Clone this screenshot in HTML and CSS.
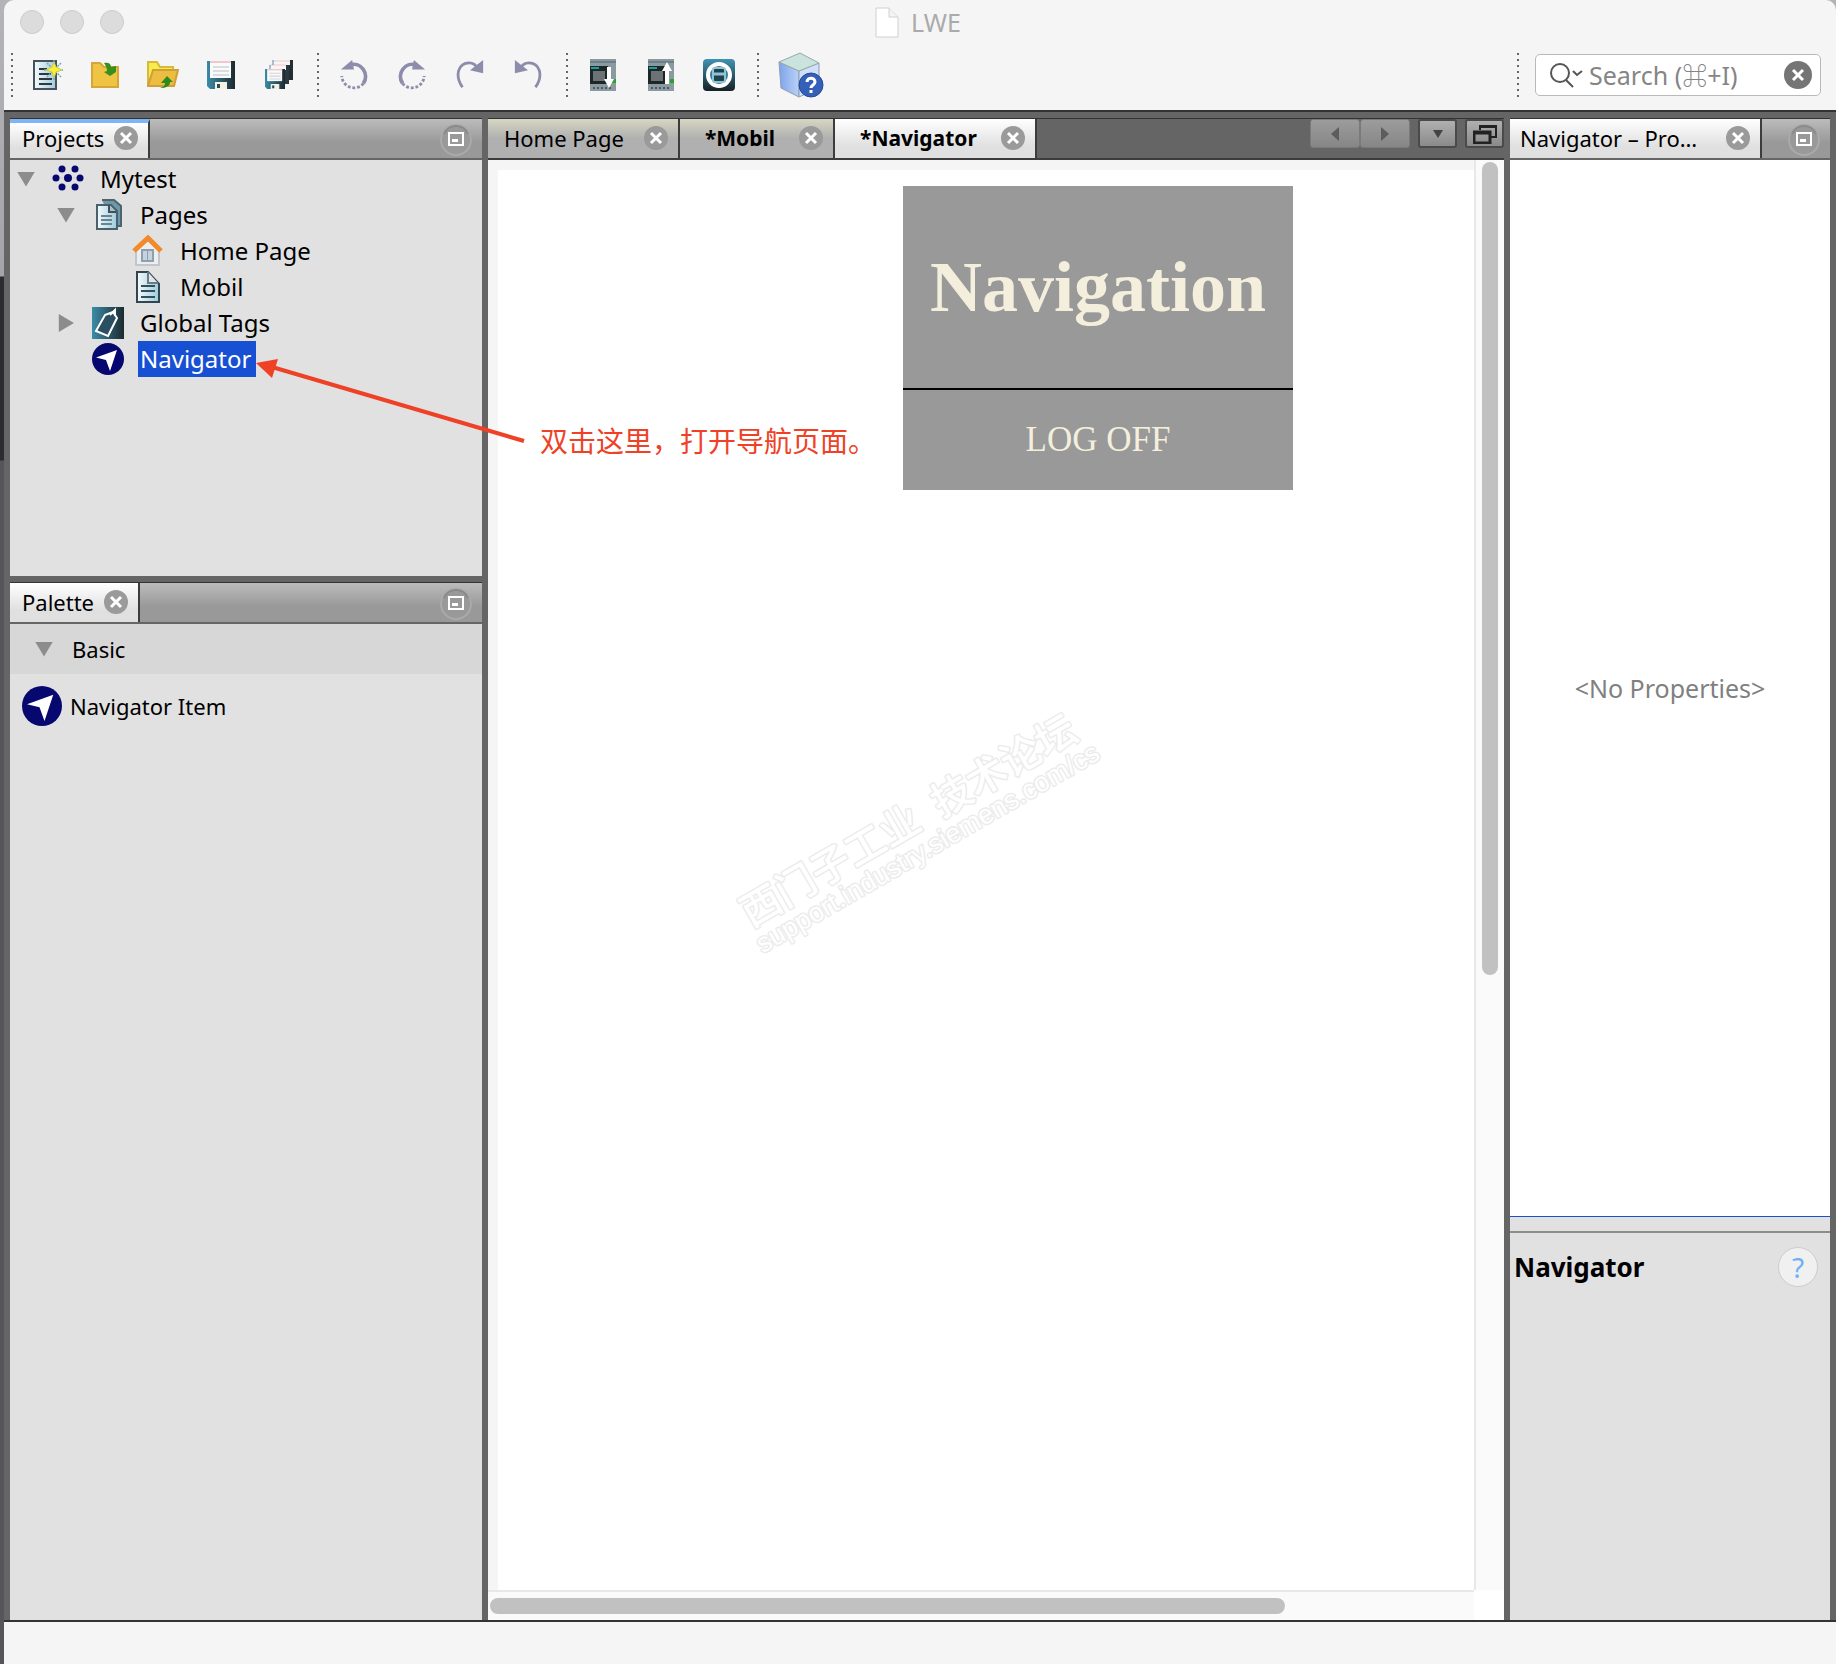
FILE: index.html
```html
<!DOCTYPE html>
<html lang="en">
<head>
<meta charset="utf-8">
<title>LWE</title>
<link rel="stylesheet" href="styles.css">
</head>
<body>
<svg class="defs" width="0" height="0" aria-hidden="true">
  <defs>
    <linearGradient id="page-fill" x1="0" y1="0" x2="1" y2="0"><stop offset="0" stop-color="#f4fafc"/><stop offset="1" stop-color="#9dcbdc"/></linearGradient>
    <linearGradient id="disk-fill" x1="0" y1="0" x2="1" y2="0"><stop offset="0" stop-color="#3b8ba8"/><stop offset="1" stop-color="#1c2a30"/></linearGradient>
    <linearGradient id="web-fill" x1="0" y1="0" x2="0" y2="1"><stop offset="0" stop-color="#3f93b3"/><stop offset="1" stop-color="#172125"/></linearGradient>
    <linearGradient id="cube-fill" x1="0" y1="0" x2="1" y2="0"><stop offset="0" stop-color="#7ea3ea"/><stop offset="1" stop-color="#b9d2f6"/></linearGradient>
    <symbol id="close" viewBox="0 0 24 24"><circle cx="12" cy="12" r="12" fill="#9a9a9a"/><path d="M7 7l10 10M17 7L7 17" stroke="#fff" stroke-width="3"/></symbol>
    <symbol id="minimize" viewBox="0 0 32 32"><circle cx="16" cy="16" r="15" fill="#999" stroke="#aaa" stroke-width="2"/><path d="M4 10A13 13 0 0 1 28 10" fill="none" stroke="#8b8b8b" stroke-width="2"/><rect x="9" y="9" width="14" height="12" fill="none" stroke="#fff" stroke-width="2"/><path d="M12 16.500h6" stroke="#fff" stroke-width="3"/></symbol>
    <symbol id="compass" viewBox="0 0 32 32"><circle cx="16" cy="16" r="16" fill="#07086f"/><path d="M25 7L4 14.500l10 2.500 4 11z" fill="#fff"/></symbol>
    <symbol id="floppy" viewBox="0 0 28 28"><path d="M0 0h28v28H3l-3-3z" fill="url(#disk-fill)"/><path d="M3 0h21v17H3z" fill="#fafafa"/><path d="M3 1h21" stroke="#f3c6ce" stroke-width="2"/><path d="M6 6h16M6 10h16M6 14h16" stroke="#cfd3d8" stroke-width="1.500"/><path d="M8 21h12v7H8z" fill="#f3f2df"/><path d="M10 23h3v4h-3z" fill="#244c5b"/></symbol>
    <symbol id="plc" viewBox="0 0 26 32"><path d="M0 0h26v32H0z" fill="#8a9aa0"/><path d="M0 3h26" stroke="#6c7e86" stroke-width="2"/><path d="M0 7h18v18H0z" fill="#1c2828"/><path d="M1 9h8" stroke="#18a0a0" stroke-width="2"/><path d="M3 12h12v10H3z" fill="#6c7276"/><path d="M3 29h20" stroke="#4c5a60" stroke-width="2" stroke-dasharray="2 2"/><path d="M22 20h4v4h-4z" fill="#2aa32a"/></symbol>
    <symbol id="arc" viewBox="0 0 32 32"><path d="M8 29C-1 16 4 3 15 3c5 0 8 3 10 7" fill="none" stroke="#8d8cab" stroke-width="3"/><path d="M30 0v14l-14-3z" fill="#8d8cab"/></symbol>
    <symbol id="spin" viewBox="0 0 32 32"><path d="M6 25A13 13 0 0 1 20 5" fill="none" stroke="#8d8cab" stroke-width="4"/><path d="M6 25A13 13 0 0 0 29 17" fill="none" stroke="#8d8cab" stroke-width="3" stroke-dasharray="3 2"/><path d="M18 0l12 10-14 0z" fill="#8d8cab"/></symbol>
  </defs>
</svg>
<div class="window">
  <header class="titlebar">
    <div class="lights"><span></span><span></span><span></span></div>
    <h1 class="title"><svg width="24" height="31" viewBox="0 0 24 31"><path d="M1 1h13l9 9v20H1z" fill="#fff" stroke="#d0d0d0"/><path d="M14 1v9h9" fill="#f4f4f4" stroke="#d0d0d0"/></svg>LWE</h1>
  </header>

  <div class="toolbar" role="toolbar">
    <span class="sep"></span>
    <button class="tool" aria-label="New"><svg width="32" height="32" viewBox="0 0 32 32"><path d="M3 2h22v28H3z" fill="url(#page-fill)" stroke="#47525c" stroke-width="2"/><path d="M8 10h8M8 15h12M8 20h13M8 25h13" stroke="#30383e" stroke-width="2"/><path d="M23 1v20M13 11h20M16 4l14 14M30 4L16 18" stroke="#6fa6cc" stroke-width="1.500" stroke-dasharray="2 1"/><path d="M23 3l2 5 6 3-6 2-2 6-2-6-6-2 6-3z" fill="#f4f03c" stroke="#d9c93a"/></svg></button>
    <button class="tool" aria-label="New project"><svg width="30" height="30" viewBox="0 0 30 30"><path d="M2 3h8l4 4h14v20H2z" fill="#f0c443" stroke="#d6a63a" stroke-width="2"/><path d="M14 3c5-1 7 1 7 4l5-1v6l-6 4-6-4 3-1c0-3-1-5-3-8z" fill="#36901f"/></svg></button>
    <button class="tool" aria-label="Open project"><svg width="32" height="30" viewBox="0 0 32 30"><path d="M1 27V2h9l3 5h13v5" fill="#f3ee4c" stroke="#d9b93a" stroke-width="2"/><path d="M6 10h25l-4 16H1z" fill="#edbd41" stroke="#d0a038" stroke-width="2"/><path d="M13 28c4-1 5-3 5-5h-4l6-7 6 6h-3c0 4-4 6-10 6z" fill="#2f8a1c"/></svg></button>
    <button class="tool" aria-label="Save"><svg width="28" height="28"><use href="#floppy"/></svg></button>
    <button class="tool" aria-label="Save all"><svg width="28" height="30" viewBox="0 0 28 30"><path d="M8 0h20v20h-4V3H8z" fill="#222e33"/><path d="M8 0h17v5H8z" fill="#f6f6f6"/><path d="M8 1h17" stroke="#f3c6ce"/><path d="M5 5h19v19h-4V8H5z" fill="#2b383e"/><path d="M5 5h16v5H5z" fill="#f6f6f6"/><path d="M5 5h16" stroke="#f3c6ce"/><path d="M8 0v5M5 5v5" stroke="#4592ad"/><use href="#floppy" x="0" y="9" width="20" height="20"/></svg></button>
    <span class="sep"></span>
    <button class="tool" aria-label="Rotate back"><svg class="flip" width="30" height="32"><use href="#spin"/></svg></button>
    <button class="tool" aria-label="Rotate forward"><svg width="30" height="32"><use href="#spin"/></svg></button>
    <button class="tool" aria-label="Redo"><svg width="30" height="32"><use href="#arc"/></svg></button>
    <button class="tool" aria-label="Undo"><svg class="flip" width="30" height="32"><use href="#arc"/></svg></button>
    <span class="sep"></span>
    <button class="tool" aria-label="Download"><svg width="26" height="32" viewBox="0 0 26 32"><use href="#plc"/><path d="M17 8h4v12h3l-5 9-5-9h3z" fill="#fff"/></svg></button>
    <button class="tool" aria-label="Upload"><svg width="26" height="32" viewBox="0 0 26 32"><use href="#plc"/><path d="M17 25h4V12h3l-5-9-5 9h3z" fill="#fff"/></svg></button>
    <button class="tool" aria-label="Web view"><svg width="32" height="32" viewBox="0 0 32 32"><rect width="32" height="32" rx="4" fill="url(#web-fill)"/><circle cx="16" cy="16" r="11" fill="#387f99" stroke="#fff" stroke-width="4"/><rect x="10" y="9" width="12" height="14" rx="2" fill="#22414e" stroke="#8fc3d6" stroke-width="2"/><path d="M11 15h10" stroke="#8fc3d6" stroke-width="3"/></svg></button>
    <span class="sep"></span>
    <button class="tool tool-wide" aria-label="Help"><svg width="46" height="46" viewBox="0 0 46 46"><path d="M1 10l20 9v26L3 36z" fill="url(#cube-fill)" stroke="#8e9cb8"/><path d="M21 19l20-8v25l-20 9z" fill="#cfe0f8" stroke="#8e9cb8"/><path d="M1 10L22 1l19 10-20 8z" fill="#cae3dc" stroke="#98aaa8"/><circle cx="33" cy="33" r="12" fill="#3560ba" stroke="#27489a"/><path d="M29 30c0-5 8-5 8 0 0 3-4 3-4 6" fill="none" stroke="#fff" stroke-width="3"/><path d="M31.500 38h3v3h-3z" fill="#fff"/></svg></button>
    <span class="sep sep-end"></span>
    <label class="search">
      <svg width="34" height="26" viewBox="0 0 34 26"><circle cx="11" cy="11" r="9" fill="none" stroke="#555" stroke-width="2"/><path d="M17 18l7 7M24 9l4 4 5-4" fill="none" stroke="#555" stroke-width="2"/></svg>
      <input type="text" aria-label="Search" placeholder="Search (⌘+I)">
      <button class="plain" aria-label="Clear"><svg width="28" height="28" viewBox="0 0 28 28"><circle cx="14" cy="14" r="14" fill="#757575"/><path d="M9 9l10 10M19 9L9 19" stroke="#fff" stroke-width="3"/></svg></button>
    </label>
  </div>

  <main class="workspace">
    <div class="side">
      <section class="panel projects">
        <div class="tabbar">
          <div class="tab tab-active tab-focus"><span>Projects</span><button class="plain" aria-label="Close Projects"><svg width="24" height="24"><use href="#close"/></svg></button></div>
          <button class="plain min" aria-label="Minimize Projects"><svg width="32" height="32"><use href="#minimize"/></svg></button>
        </div>
        <ul class="tree">
          <li class="row"><span class="twist open"></span><svg class="ico" viewBox="0 0 32 32"><path d="M0 15h32" stroke="#c9cbe0"/><g fill="#07086f"><circle cx="10" cy="6" r="3.500"/><circle cx="23" cy="6" r="3.500"/><circle cx="4" cy="15" r="3.500"/><circle cx="16" cy="15" r="4"/><circle cx="28" cy="15" r="3.500"/><circle cx="10" cy="24" r="3.500"/><circle cx="23" cy="24" r="3.500"/></g></svg><span class="name">Mytest</span></li>
          <li class="row level-1"><span class="twist open"></span><svg class="ico" viewBox="0 0 32 32"><path d="M10 1h12l7 6v20h-7" fill="#6f97a8" stroke="#4b6470" stroke-width="2"/><path d="M5 6h14l6 6v18H5z" fill="url(#page-fill)" stroke="#47616d" stroke-width="2"/><path d="M17 6v7h7" fill="#aebfc6" stroke="#3c5058" stroke-width="2"/><path d="M9 17h11M9 21h11M9 25h11" stroke="#6a8490" stroke-width="2"/></svg><span class="name">Pages</span></li>
          <li class="row level-2"><svg class="ico" viewBox="0 0 32 32"><path d="M4 15L16 5l11 10v15H4z" fill="#eceef0" stroke="#c2c6ca" stroke-width="2"/><path d="M10 15h11v11H10z" fill="#c5d3de" stroke="#8f9fac" stroke-width="2"/><path d="M15.500 15v11" stroke="#8f9fac"/><path d="M2 16L16 3l13 13" fill="none" stroke="#f28a2c" stroke-width="5"/></svg><span class="name">Home Page</span></li>
          <li class="row level-2"><svg class="ico" viewBox="0 0 32 32"><path d="M5 1h11l11 12v18H5z" fill="url(#page-fill)" stroke="#33454f" stroke-width="2"/><path d="M16 1v11h10" fill="#dfe7ea" stroke="#6b7c84" stroke-width="2"/><path d="M9 15h14M9 20h14M9 26h14" stroke="#31505c" stroke-width="2"/></svg><span class="name">Mobil</span></li>
          <li class="row level-1"><span class="twist shut"></span><svg class="ico" viewBox="0 0 32 32"><rect width="32" height="32" fill="url(#disk-fill)"/><path d="M13 8l8-3 4 6-9 18-12-5z" fill="#2a4f60" stroke="#fff" stroke-width="2"/><path d="M18 8l5-5v6" fill="none" stroke="#fff" stroke-width="2"/></svg><span class="name">Global Tags</span></li>
          <li class="row level-1"><span class="twist"></span><svg class="ico"><use href="#compass"/></svg><span class="name selected">Navigator</span></li>
        </ul>
      </section>
      <section class="panel palette">
        <div class="tabbar">
          <div class="tab tab-active"><span>Palette</span><button class="plain" aria-label="Close Palette"><svg width="24" height="24"><use href="#close"/></svg></button></div>
          <button class="plain min" aria-label="Minimize Palette"><svg width="32" height="32"><use href="#minimize"/></svg></button>
        </div>
        <h2 class="category"><span class="twist open"></span>Basic</h2>
        <div class="item"><svg width="40" height="40"><use href="#compass"/></svg><span>Navigator Item</span></div>
      </section>
    </div>

    <section class="editor">
      <div class="tabbar tabbar-dark">
        <div class="tab"><span>Home Page</span><button class="plain" aria-label="Close Home Page"><svg width="24" height="24"><use href="#close"/></svg></button></div>
        <div class="tab tab-changed"><span>*Mobil</span><button class="plain" aria-label="Close Mobil"><svg width="24" height="24"><use href="#close"/></svg></button></div>
        <div class="tab tab-active tab-changed"><span>*Navigator</span><button class="plain" aria-label="Close Navigator"><svg width="24" height="24"><use href="#close"/></svg></button></div>
        <div class="tabtools">
          <div class="pair">
            <button class="small" aria-label="Previous tab"><svg width="8" height="14" viewBox="0 0 8 14"><path d="M8 0v14L0 7z" fill="#5c5c5c"/></svg></button>
            <button class="small" aria-label="Next tab"><svg width="8" height="14" viewBox="0 0 8 14"><path d="M0 0v14l8-7z" fill="#5c5c5c"/></svg></button>
          </div>
          <button class="small strong" aria-label="Tab list"><svg width="10" height="8" viewBox="0 0 10 8"><path d="M0 0h10L5 8z" fill="#444"/></svg></button>
          <button class="small strong" aria-label="Restore"><svg width="24" height="20" viewBox="0 0 24 20"><path d="M7 6V2h16v11h-5M7 3h16" fill="none" stroke="#222" stroke-width="2"/><path d="M1 8h16v11H1zM1 9h16" fill="none" stroke="#222" stroke-width="3"/></svg></button>
        </div>
      </div>
      <div class="view">
        <div class="canvas">
          <div class="sheet">
            <nav class="nav">
              <h2>Navigation</h2>
              <a href="#logoff">LOG OFF</a>
            </nav>
          </div>
          <svg class="watermark" width="400" height="300" viewBox="-200 -150 400 300"><g transform="rotate(-30)" text-anchor="middle"><text class="mark-big" y="15">西门子工业&#8194;技术论坛</text><text class="mark-small" x="3" y="43">support.industry.siemens.com/cs</text></g></svg>
        </div>
        <div class="vscroll"><span></span></div>
        <div class="hscroll"><span></span></div>
        <div class="corner"></div>
      </div>
    </section>

    <section class="panel properties">
      <div class="tabbar">
        <div class="tab tab-active tab-props"><span>Navigator – Pro…</span><button class="plain" aria-label="Close Properties"><svg width="24" height="24"><use href="#close"/></svg></button></div>
        <button class="plain min" aria-label="Minimize Properties"><svg width="32" height="32"><use href="#minimize"/></svg></button>
      </div>
      <div class="empty">&lt;No Properties&gt;</div>
      <div class="about">
        <div class="about-head"><h2>Navigator</h2><button class="help" aria-label="Help">?</button></div>
      </div>
    </section>

    <div class="note" lang="zh">
      <svg width="270" height="88" viewBox="0 0 270 88"><path d="M268 82L16 8" stroke="#ee4125" stroke-width="4"/><path d="M0 4l22-4-6 19z" fill="#ee4125"/></svg>
      <p>双击这里，打开导航页面。</p>
    </div>
  </main>
  <footer class="status"></footer>
</div>
</body>
</html>
```
FILE: styles.css
```css
* { box-sizing: border-box; }

body {
  margin: 0;
  padding-left: 4px;
  background: linear-gradient(#b4b3b8 0, #a5a4aa 276px, #2b2c2f 277px, #2b2c2f 460px, #555659 461px);
  color: #000;
  font: 22px/30px "Noto Sans", "Noto Sans CJK SC", sans-serif;
}

h1, h2, p, ul { margin: 0; padding: 0; font-weight: 400; }
button, input { font: inherit; color: inherit; }
svg { display: block; flex: none; }
.defs { position: absolute; }
.plain { display: block; padding: 0; border: 0; background: none; flex: none; }

.window {
  display: flex;
  flex-direction: column;
  min-height: 100vh;
  border-radius: 10px 10px 0 0;
  overflow: hidden;
  background: #f5f5f5;
}

.titlebar {
  display: grid;
  grid-template-columns: 1fr auto 1fr;
  align-items: center;
  height: 44px;
  padding: 0 20px 0 16px;
}
.lights { display: flex; gap: 16px; }
.lights span {
  width: 24px;
  height: 24px;
  border: 1px solid #cbcbcb;
  border-radius: 50%;
  background: #dcdcdc;
}
.title { display: flex; align-items: center; gap: 12px; font-size: 25px; color: #aaa; }

.toolbar { display: flex; align-items: center; height: 66px; padding: 0 15px 4px 0; }
.sep {
  flex: none;
  width: 2px;
  height: 44px;
  margin: 0 6px 0 9px;
  background: repeating-linear-gradient(#666 0, #666 2px, transparent 2px, transparent 6px);
}
.sep:first-child { margin: 0 5px 0 7px; }
.sep-end { margin: 0 16px 0 auto; }
.tool {
  display: flex;
  align-items: center;
  justify-content: center;
  flex: none;
  width: 58px;
  height: 46px;
  padding: 0;
  border: 0;
  background: none;
}
.tool-wide { width: 72px; }
.flip { transform: scaleX(-1); }

.search {
  display: flex;
  align-items: center;
  width: 286px;
  height: 42px;
  padding: 0 8px 0 13px;
  border: 1px solid #b9b9b9;
  border-radius: 5px;
  background: #fff;
}
.search input {
  flex: 1;
  min-width: 0;
  height: 36px;
  padding: 0 0 0 6px;
  border: 0;
  outline: 0;
  background: none;
  font-size: 25px;
}
.search input::placeholder { color: #858585; opacity: 1; }

.workspace {
  position: relative;
  flex: 1;
  display: grid;
  grid-template-columns: 472px minmax(0, 1fr) 320px;
  gap: 6px;
  padding: 6px 6px 0;
  border-top: 2px solid #333;
  background: #656565;
}
.side { display: flex; flex-direction: column; gap: 6px; }
.panel { display: flex; flex-direction: column; background: #e1e1e1; }
.projects { height: 458px; }
.palette { flex: 1; }

.tabbar {
  display: flex;
  height: 42px;
  border-top: 1px solid #333;
  border-bottom: 2px solid #656565;
  background: linear-gradient(#bcbcbc, #999 60%);
}
.tab {
  display: flex;
  align-items: center;
  padding: 0 10px 2px 12px;
  border-right: 2px solid #3c3c3c;
  background: linear-gradient(#d6d7c2, #b0b0b0 50%);
  white-space: nowrap;
}
.tab .plain { margin-left: 10px; }
.tab-active { background: linear-gradient(#fff, #e0e0e0 70%); }
.tab-focus { border-top: 4px solid #7fb5f5; padding-bottom: 6px; }
.min { margin: 2px 10px 0 auto; }

.tabbar-dark { background: #656565; border-bottom-color: #3c3c3c; }
.tabbar-dark .tab { padding: 0 10px 2px 16px; }
.tabbar-dark .tab .plain { margin-left: 20px; }
.tabbar-dark .tab-changed { padding-left: 25px; font-size: 21px; font-weight: 700; }
.tabbar-dark .tab-changed .plain { margin-left: 24px; }
.tabtools { display: flex; gap: 8px; height: 29px; margin-left: auto; }
.pair { display: flex; }
.small {
  display: flex;
  align-items: center;
  justify-content: center;
  width: 50px;
  padding: 0;
  border: 1px solid #7a7a7a;
  border-radius: 3px;
  background: linear-gradient(#9c9c9c, #868686);
}
.strong { width: 39px; border: 2px solid #4a4a4a; background: linear-gradient(#b0b0b0, #8a8a8a); }

.tree { list-style: none; padding-top: 1px; font-size: 24px; }
.row { display: flex; align-items: center; height: 36px; padding-left: 7px; }
.level-1 { padding-left: 47px; }
.level-2 { padding-left: 122px; }
.twist { flex: none; width: 18px; }
.open { height: 15px; background: #8c8c8c; clip-path: polygon(0 0, 100% 0, 50% 100%); }
.shut { height: 18px; background: #8c8c8c; clip-path: polygon(10% 0, 94% 50%, 10% 100%); }
.ico { width: 32px; height: 32px; }
.twist + .ico { margin-left: 17px; }
.name { margin-left: 14px; padding: 0 2px; line-height: 36px; }
.selected { padding-right: 5px; background: #1850d3; color: #fff; }

.category {
  display: flex;
  align-items: center;
  gap: 19px;
  height: 50px;
  padding-left: 25px;
  background: #d7d7d7;
  font-size: 22px;
}
.item { display: flex; align-items: center; gap: 8px; padding: 12px; }

.editor { display: flex; flex-direction: column; }
.view {
  flex: 1;
  display: grid;
  grid-template: minmax(0, 1fr) 30px / minmax(0, 1fr) 30px;
}
.canvas { position: relative; overflow: hidden; padding: 10px 0 0 10px; background: #f5f5f5; }
.sheet { width: 1200px; height: 100%; padding-top: 16px; background: #fff; }
.nav {
  width: 390px;
  margin: 0 auto;
  background: #999;
  color: #f4efdc;
  font-family: "Liberation Serif", serif;
  text-align: center;
}
.nav h2 { padding: 60px 0; border-bottom: 2px solid #000; font-size: 72px; line-height: 82px; font-weight: 700; }
.nav a { display: block; color: inherit; text-decoration: none; font-size: 35px; line-height: 100px; }

.vscroll { padding: 2px 6px; border-left: 2px solid #e8e8e8; background: #fafafa; }
.vscroll span { display: block; width: 16px; height: 57%; border-radius: 8px; background: #c1c1c1; }
.hscroll { padding: 6px 2px; border-top: 2px solid #e8e8e8; background: #fafafa; }
.hscroll span { display: block; width: 81%; height: 16px; border-radius: 8px; background: #c1c1c1; }
.corner { background: #fff; }

.watermark { position: absolute; left: 220px; top: 510px; }
.watermark text { fill: #fff; stroke: #ececec; stroke-width: 3px; paint-order: stroke; stroke-linejoin: round; }
.mark-big { font: 500 40px "Noto Sans CJK SC", sans-serif; }
.mark-small { font: 27px "Liberation Sans", sans-serif; }

.tab-props { width: 252px; padding-left: 10px; }
.tab-props .plain { margin-left: auto; }
.empty {
  flex: 1;
  display: flex;
  align-items: center;
  justify-content: center;
  background: #fff;
  color: #808080;
  font-size: 25px;
}
.about { height: 404px; border-top: 1px solid #1850d3; }
.about-head {
  display: flex;
  align-items: center;
  justify-content: space-between;
  margin-top: 14px;
  padding: 14px 12px 0 4px;
  border-top: 2px solid #8c8c8c;
}
.about h2 { font-size: 26px; font-weight: 700; }
.help {
  width: 40px;
  height: 40px;
  padding: 0;
  border: 1px solid #ccc;
  border-radius: 50%;
  background: #f0f0f0;
  color: #6cb0f7;
  font-size: 28px;
  line-height: 36px;
}

.note { position: absolute; left: 252px; top: 247px; display: flex; align-items: flex-end; gap: 14px; }
.note p { margin-bottom: -13px; font: 28px/40px "Noto Sans CJK SC", sans-serif; color: #ee4125; white-space: nowrap; }

.status { height: 44px; border-top: 2px solid #333; background: #f5f5f5; }
```
